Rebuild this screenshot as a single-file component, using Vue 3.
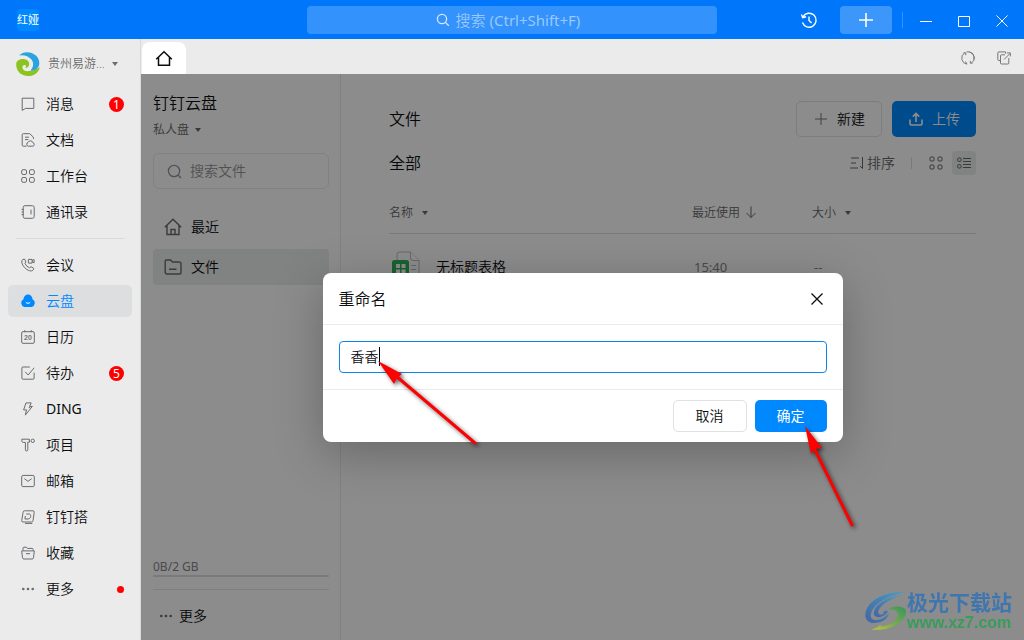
<script setup>
import { ref } from 'vue'

const fileName = ref('香香')

const icons = {
  message: '<path d="M1.200 1.200h11.600v10.200H4.600L1.200 13.400z"/>',
  doc: '<path d="M5.500 13.200H2.200a1 1 0 0 1-1-1V1.700a1 1 0 0 1 1-1h6.600L12.400 4.200V6M4 4.200h4M4 6.600h3.400"/><path d="M7.300 13.200a2 2 0 0 1-.1-3.900 2.500 2.500 0 0 1 4.700.4 1.800 1.800 0 0 1 0 3.500z"/>',
  apps: '<rect x=".7" y=".7" width="4.800" height="4.800" rx="1.400"/><rect x="8.500" y=".7" width="4.800" height="4.800" rx="1.400"/><rect x=".7" y="8.500" width="4.800" height="4.800" rx="1.400"/><rect x="8.500" y="8.500" width="4.800" height="4.800" rx="1.400"/>',
  contacts: '<rect x="2.200" y=".7" width="11" height="12.600" rx="1.800"/><path d="M.6 4.400h2M.6 7h2M.6 9.600h2M10 4.600v4.800"/>',
  meeting: '<path d="M1.900 1.400 3.500 1.100 5 4 3.900 5.300a8 8 0 0 0 4.600 4.500l1.500-1.100 2.700 1.600-.4 1.600c-1 1.300-3 1.300-5 .4C4.500 11 1.800 8.300 1 5.200.6 3.600 .8 2.100 1.900 1.400z"/><path d="M7.400 1.400h3.700v3.700H7.400zM11.100 2.600l2-1v3.200l-2-1"/>',
  drive: '<path fill="#0089ff" stroke="none" d="M7 .6a4.500 4.500 0 0 1 4.500 4.600A4.200 4.200 0 0 1 10.700 13H3.300A4.200 4.200 0 0 1 2.500 5.200 4.500 4.500 0 0 1 7 .6z"/><path stroke="#fff" d="M4.800 8.300c1.300 1.300 3.100 1.300 4.400 0"/>',
  calendar: '<rect x=".7" y="1.700" width="12.600" height="11.600" rx="1.200"/><path d="M3.800 .2v2M10.200 .2v2"/><text x="7" y="10.200" text-anchor="middle" font-size="7" font-weight="700" font-family="Liberation Sans, sans-serif" fill="#74777a" stroke="none">20</text>',
  todo: '<path d="M8.800 1H1.900a1 1 0 0 0-1 1V12.200a1 1 0 0 0 1 1h10.200a1 1 0 0 0 1-1V6.600M4.200 5.800l3 3.200 6-7.200"/>',
  ding: '<path d="M5 .9h5.200L8.600 4.400h2.800L4.300 13.100l1.200-5.200H2.600z"/><path d="M7.800 5.600h1.400"/>',
  project: '<path d="M.8 1.200h7.600v3H6.800v7.600a1.200 1.200 0 0 1-2.400 0V4.400H2.200A1.600 1.600 0 0 1 .8 2.800z"/><circle cx="11.700" cy="2.800" r="1.700"/>',
  mail: '<rect x=".7" y="1.400" width="12.600" height="11.200" rx="1.400"/><path d="M3.400 4.700 7 7.400l3.600-2.700"/>',
  dida: '<path d="M3.600 .8h8.300a1.400 1.400 0 0 1 1.300 1.600l-1.200 8.400a1.400 1.400 0 0 1-1.400 1.200H2A1.300 1.300 0 0 1 .7 10.600l1.400-8.300A1.500 1.500 0 0 1 3.600 .8z"/><path d="M5.200 4h2.900c2.600 0 2 5-1 5H3.900l.5-3M4 13.400h7.400"/>',
  favorite: '<path d="M2 4.600V2.200a1 1 0 0 1 1-1h2.400l1 1.200h4.700a1 1 0 0 1 1 1v1.200M.7 4.900h12.600l-.8 6.800a1.500 1.500 0 0 1-1.500 1.300H3a1.500 1.500 0 0 1-1.500-1.300zM5 7.700h4"/>',
  more: '<g fill="#686b6e" stroke="none"><circle cx="2.300" cy="7" r="1.300"/><circle cx="7" cy="7" r="1.300"/><circle cx="11.700" cy="7" r="1.300"/></g>'
}

const navGroups = [
  [
    { icon: 'message', label: '消息', badge: 1 },
    { icon: 'doc', label: '文档' },
    { icon: 'apps', label: '工作台' },
    { icon: 'contacts', label: '通讯录' }
  ],
  [
    { icon: 'meeting', label: '会议' },
    { icon: 'drive', label: '云盘', active: true },
    { icon: 'calendar', label: '日历' },
    { icon: 'todo', label: '待办', badge: 5 },
    { icon: 'ding', label: 'DING', latin: true },
    { icon: 'project', label: '项目' },
    { icon: 'mail', label: '邮箱' },
    { icon: 'dida', label: '钉钉搭' },
    { icon: 'favorite', label: '收藏' },
    { icon: 'more', label: '更多', dot: true }
  ]
]
</script>

<template>
  <div class="app">
    <header class="titlebar">
      <div class="brand"><span class="logo">红娅</span></div>
      <button class="global-search" type="button">
        <svg width="14" height="14" viewBox="0 0 14 14"><circle cx="6" cy="6" r="4.600" /><path d="M9.400 9.400 12.800 12.800" /></svg>
        <span>搜索 <span class="latin">(Ctrl+Shift+F)</span></span>
      </button>
      <div class="window-tools">
        <button class="history" type="button" aria-label="历史">
          <svg width="18" height="18" viewBox="0 0 18 18"><path d="M3 5.800A7 7 0 1 1 2.500 11.500M1.500 3.500l1.200 3.200 3.400-.9M9 5.500v4l2.600 2.400" /></svg>
        </button>
        <button class="create" type="button" aria-label="创建">
          <svg width="16" height="16" viewBox="0 0 16 16"><path d="M8 1v14M1 8h14" /></svg>
        </button>
        <span class="tool-divider"></span>
        <button class="win" type="button" aria-label="最小化">
          <svg width="14" height="14" viewBox="0 0 14 14"><path d="M1 8.500h12" /></svg>
        </button>
        <button class="win" type="button" aria-label="最大化">
          <svg width="14" height="14" viewBox="0 0 14 14"><path d="M1.500 3.500h11v10h-11z" /></svg>
        </button>
        <button class="win" type="button" aria-label="关闭窗口">
          <svg width="14" height="14" viewBox="0 0 14 14"><path d="M1.500 2.500l11 11M12.500 2.500l-11 11" /></svg>
        </button>
      </div>
    </header>

    <div class="shell">
      <aside class="sidebar">
        <button class="profile" type="button">
          <svg class="avatar" width="24" height="24" viewBox="0 0 24 24">
            <path fill="#2aa3e0" d="M3 3.500C7-1 15-1 20 3.500c5 5 4 12-.5 14.500-2 1-4 1-5 .5 3-3 3.600-7.500 1-11C12.500 3.500 7 2.500 3 3.500z" />
            <path fill="#8cc31f" d="M.2 12C.4 8.500 4 6.800 7.500 7c4 .3 6.200 3 5.600 6-.5 2.200-2.800 3.400-4.300 2.600 1.500-.4 1.600-1.500.8-2.200-1.500-1-3.400 0-3.200 2 .2 2.600 2.600 4.200 7 3.700 4-.4 8-2 10.400-4.200C23 20.500 18 24 12 24 5 24 0 19 .2 12z" />
          </svg>
          <span>贵州易游...</span>
          <i class="caret-down"></i>
        </button>
        <nav>
          <ul v-for="(group, g) in navGroups" :key="g" class="nav-group">
            <li v-for="item in group" :key="item.label">
              <a href="#" class="nav-item" :class="{ active: item.active }">
                <svg width="14" height="14" viewBox="0 0 14 14" v-html="icons[item.icon]"></svg>
                <span class="nav-label" :class="{ latin: item.latin }">{{ item.label }}</span>
                <span v-if="item.badge" class="badge">{{ item.badge }}</span>
                <span v-if="item.dot" class="dot"></span>
              </a>
            </li>
          </ul>
        </nav>
      </aside>

      <div class="main">
        <div class="tabs">
          <button class="home-tab" type="button" aria-label="首页">
            <svg width="18" height="18" viewBox="0 0 18 18"><path d="M1.200 10.200 9 2.800l7.800 7.400M3.500 8.500v7.800h11V8.500" /></svg>
          </button>
          <div class="tab-tools">
            <button type="button" aria-label="刷新">
              <svg width="14" height="14" viewBox="0 0 14 14"><path d="M5.800 13.200A6.200 6.200 0 0 1 3.400 2M2.500 1.800h2.200v2.400M5.500 1a6.200 6.200 0 0 1 7.400 7.500M4.500 10.500l1.500 2.700M8.200 .8A6.200 6.200 0 0 1 10.600 12M11.500 12.200H9.300V9.800" /></svg>
            </button>
            <button type="button" aria-label="新窗口打开">
              <svg width="14" height="14" viewBox="0 0 14 14"><path d="M3.500 9.500H1.800a1 1 0 0 1-1-1V1.900a1 1 0 0 1 1-1h6.700v1.600M8 3.800H4.500a1 1 0 0 0-1 1V12a1 1 0 0 0 1 1h6.300a1 1 0 0 0 1-1V7M7 8.500l6-6M9.800 1.900h3.500v3.500" /></svg>
            </button>
          </div>
        </div>

        <div class="workspace">
          <section class="drive-nav">
            <h1>钉钉云盘</h1>
            <button class="space" type="button">私人盘 <i class="caret-down"></i></button>
            <label class="file-search">
              <svg width="15" height="15" viewBox="0 0 16 16"><circle cx="7.500" cy="7.500" r="6" /><path d="M12 12 15 15" /></svg>
              <input type="text" placeholder="搜索文件" aria-label="搜索文件" />
            </label>
            <ul class="drive-list">
              <li><a href="#">
                <svg width="18" height="18" viewBox="0 0 18 18"><path d="M.8 9.200 9 1.200l8.200 8M3 7.500v9h12v-9M7 16.200v-4.700h4v4.700" /></svg>
                <span>最近</span></a></li>
              <li><a href="#" class="selected">
                <svg width="18" height="18" viewBox="0 0 18 18"><path d="M1.200 14.200V3.200A1.200 1.200 0 0 1 2.400 2h4.200l1.800 2h6.800A1.800 1.800 0 0 1 17 5.800v8.400a1.800 1.800 0 0 1-1.800 1.800H3a1.800 1.800 0 0 1-1.800-1.800zM5 11.200h7.500" /></svg>
                <span>文件</span></a></li>
            </ul>
            <div class="drive-foot">
              <p class="quota latin">0B/2 GB</p>
              <div class="quota-bar"></div>
              <a href="#" class="drive-more">
                <svg width="14" height="14" viewBox="0 0 14 14" v-html="icons.more"></svg>
                <span>更多</span>
              </a>
            </div>
          </section>

          <section class="files">
            <div class="files-head">
              <h2>文件</h2>
              <div class="actions">
                <button class="new" type="button">
                  <svg width="14" height="14" viewBox="0 0 14 14"><path d="M7 1v12M1 7h12" /></svg>新建
                </button>
                <button class="upload" type="button">
                  <svg width="16" height="16" viewBox="0 0 16 16"><path d="M2 8.500v4A1.500 1.500 0 0 0 3.500 14h9a1.500 1.500 0 0 0 1.500-1.500v-4M8 11V2.500M4.800 5.600 8 2.400l3.200 3.200" /></svg>上传
                </button>
              </div>
            </div>
            <div class="files-sub">
              <h2>全部</h2>
              <div class="view-tools">
                <button class="sort" type="button">
                  <svg width="16" height="14" viewBox="0 0 16 14"><path d="M2 2h8M2 7h5M1 12h8M13.500 1v11.500l-2.500-2.500" /></svg>排序
                </button>
                <span class="view-divider"></span>
                <button class="view" type="button" aria-label="网格">
                  <svg width="14" height="14" viewBox="0 0 14 14"><rect x="1" y="1" width="4" height="4" rx="1" /><rect x="9" y="1" width="4" height="4" rx="1" /><rect x="1" y="9" width="4" height="4" rx="1" /><rect x="9" y="9" width="4" height="4" rx="1" /></svg>
                </button>
                <button class="view current" type="button" aria-label="列表">
                  <svg width="14" height="14" viewBox="0 0 14 14"><rect x=".7" y="2" width="3.400" height="3.400" rx="1" /><rect x=".7" y="8.600" width="3.400" height="3.400" rx="1" /><path d="M6 2.500h8M6 5.500h8M6 8.500h8M6 11.500h8" /></svg>
                </button>
              </div>
            </div>
            <table>
              <colgroup><col class="c-name" /><col class="c-time" /><col /></colgroup>
              <thead>
                <tr>
                  <th scope="col">名称 <i class="caret-down"></i></th>
                  <th scope="col">最近使用
                    <svg width="12" height="12" viewBox="0 0 12 12"><path d="M6 .5v11M1.500 7 6 11.500 10.500 7" /></svg>
                  </th>
                  <th scope="col">大小 <i class="caret-down"></i></th>
                </tr>
              </thead>
              <tbody>
                <tr>
                  <td>
                    <div class="file">
                      <svg width="30" height="32" viewBox="0 0 30 32">
                        <path fill="#fff" stroke="#b8bcc8" d="M5 11V3.500A2.500 2.500 0 0 1 7.500 1h11L27 9.500v19a2.500 2.500 0 0 1-2.500 2.500h-17A2.500 2.500 0 0 1 5 28.500z" />
                        <path fill="#fff" stroke="#b8bcc8" d="M18.500 1v6A2.500 2.500 0 0 0 21 9.500h6M19 14.500h5M19 18.500h5M19 22.500h5" />
                        <rect x="0" y="9" width="17" height="17" rx="2.500" fill="#2db457" stroke="none" />
                        <path fill="#fff" stroke="none" d="M4 13h4v4H4zM9.500 13h4v4h-4zM4 18.500h4v4H4zM9.500 18.500h4v4h-4z" />
                      </svg>
                      <span>无标题表格</span>
                    </div>
                  </td>
                  <td class="meta latin">15:40</td>
                  <td class="meta latin">--</td>
                </tr>
              </tbody>
            </table>
          </section>

          <div class="overlay">
            <form class="dialog" role="dialog" aria-labelledby="dialog-title" @submit.prevent>
              <div class="dialog-head">
                <h3 id="dialog-title">重命名</h3>
                <button type="button" aria-label="关闭">
                  <svg width="14" height="14" viewBox="0 0 14 14"><path d="M1.500 1.500l11 11M12.500 1.500l-11 11" /></svg>
                </button>
              </div>
              <div class="dialog-body">
                <div class="field">
                  <input v-model="fileName" type="text" aria-labelledby="dialog-title" />
                  <span class="text-cursor"></span>
                </div>
              </div>
              <div class="dialog-foot">
                <button class="cancel" type="button">取消</button>
                <button class="confirm" type="submit">确定</button>
              </div>
              <svg class="pointers" aria-hidden="true">
                <path d="M73 103 152 170M491 175 529 252" stroke="#fe0000" stroke-width="3" stroke-linecap="round" />
                <path fill="#fe0000" d="M55 88 79 101 74 105 71 111zM482 153 499 175 492 176 488 181z" />
              </svg>
            </form>
          </div>

          <div class="watermark">
            <svg width="42" height="40" viewBox="0 0 42 40">
              <defs>
                <linearGradient id="wm-blue" x1="0" y1="1" x2="1" y2="0"><stop offset="0" stop-color="#3b62a8" /><stop offset="1" stop-color="#3fa0cc" /></linearGradient>
                <linearGradient id="wm-green" x1="0" y1="1" x2="1" y2="0"><stop offset="0" stop-color="#c8c83a" /><stop offset=".5" stop-color="#6fae4a" /><stop offset="1" stop-color="#2d9658" /></linearGradient>
              </defs>
              <path fill="url(#wm-blue)" d="M41 1C20 0 3 9 .5 22-.5 28 3 32 9 32c8 0 14-4 15-10-3 4-8 7-13 7-4 0-6-2-5-6C8 13 22 5 41 1z" />
              <path fill="url(#wm-blue)" d="M37 4C22 6 11 13 9 20.500c-1 4 2 6.500 6.500 5.500 4-1 7-3.500 7.500-6-2-.5-4 0-5.500 1.500.8-.2 1.500.1 1.300.8-.4 1.400-4.300 2-5.300 0C12 17 22 9 37 4z" />
              <path fill="url(#wm-green)" d="M23 18c6-4 17-3.500 18 2 1 9-12 17-23 18.500-4 .3-8 0-12 .5 4-1.500 7-3 9-5l2 1.500c9-1.500 15-6 16-11.500.5-4-4-6-10-6z" />
            </svg>
            <div class="watermark-text"><strong>极光下载站</strong><span>www.xz7.com</span></div>
          </div>
        </div>
      </div>
    </div>
  </div>
</template>

<style>
html, body { margin: 0; }
</style>

<style scoped>
.app, .app * { box-sizing: border-box; }
.app {
  display: flex;
  flex-direction: column;
  height: 100vh;
  overflow: hidden;
  font: 350 14px/20px "Noto Sans", "Noto Sans CJK SC", sans-serif;
  color: #0b0d0f;
}
button, input { font: inherit; color: inherit; margin: 0; }
button { padding: 0; border: 0; background: none; }
a { color: inherit; text-decoration: none; }
h1, h2, h3, p, ul { margin: 0; padding: 0; font-size: 16px; line-height: 24px; font-weight: inherit; }
ul { list-style: none; }
svg { display: block; flex: none; fill: none; stroke: currentColor; }
.app .latin { font-weight: 400; }
.caret-down {
  display: inline-block;
  border: 3px solid transparent;
  border-top: 4px solid currentColor;
  border-bottom: 0;
}

.titlebar {
  flex: none;
  display: grid;
  grid-template-columns: 1fr 40% 1fr;
  align-items: center;
  height: 39px;
  background: #0077fa;
  color: #fff;
}
.brand { padding-left: 17px; }
.logo {
  display: block;
  width: 22px;
  border-radius: 4px;
  background: #0089ff;
  font-size: 11px;
  line-height: 22px;
  font-weight: 400;
  text-align: center;
}
.global-search {
  display: flex;
  align-items: center;
  justify-content: center;
  gap: 6px;
  height: 28px;
  padding-right: 8px;
  border-radius: 4px;
  background: #3392fb;
  color: #99c9fd;
  font-size: 15px;
}
.global-search svg { color: #d6e9fe; stroke-width: 1.3; }
.window-tools { display: flex; align-items: center; justify-content: flex-end; padding-right: 3px; }
.window-tools button { display: grid; place-items: center; height: 28px; }
.history { width: 28px; margin-right: 17px; stroke-width: 1.4; }
.create { width: 52px; border-radius: 4px; background: #3d97fb; stroke-width: 1.6; }
.tool-divider { width: 1px; height: 16px; margin: 0 4px 0 10px; background: #3392fb; }
.win { width: 38px; }

.shell { flex: 1; display: flex; min-height: 0; }
.sidebar {
  flex: none;
  width: 141px;
  border-right: 1px solid #d8d9da;
  background: #ebebeb;
}
.profile {
  display: flex;
  align-items: center;
  gap: 8px;
  width: 100%;
  height: 49px;
  padding-left: 16px;
  color: #6c6c6c;
  font-size: 12px;
}
.profile .caret-down { margin-left: -1px; }
.avatar { stroke: none; }
.nav-group { display: grid; gap: 4px; padding: 0 8px; }
.nav-group + .nav-group { margin-top: 10px; }
.nav-group + .nav-group::before {
  content: "";
  height: 1px;
  margin: 0 8px 6px;
  background: #d8d9da;
}
.nav-item {
  display: flex;
  align-items: center;
  height: 32px;
  padding: 0 8px 0 13px;
  border-radius: 5px;
  font-size: 14px;
  line-height: 20px;
}
.nav-item svg { margin-right: 11px; color: #686b6e; }
.nav-item.active { background: #dcdee0; color: #0089ff; }
.nav-label { flex: 1; }
.badge {
  width: 15px;
  border-radius: 8px;
  background: #f00;
  color: #fff;
  font-size: 12px;
  font-weight: 400;
  line-height: 15px;
  text-align: center;
}
.dot { width: 7px; height: 7px; border-radius: 4px; background: #f00; }

.main { flex: 1; display: flex; flex-direction: column; min-width: 0; }
.tabs {
  flex: none;
  display: flex;
  justify-content: space-between;
  height: 35px;
  padding: 3px 8px 0 1px;
  background: #ebebeb;
}
.home-tab {
  display: grid;
  place-items: center;
  width: 44px;
  border-radius: 8px 8px 0 0;
  background: #fff;
  stroke-width: 1.5;
}
.tab-tools { display: flex; gap: 12px; color: #777; }
.tab-tools button { display: grid; place-items: center; width: 24px; }

.workspace { position: relative; flex: 1; display: flex; min-height: 0; background: #fff; }
.drive-nav {
  flex: none;
  display: flex;
  flex-direction: column;
  width: 200px;
  padding: 17px 11px 0 12px;
  border-right: 1px solid #ebeced;
}
.space { align-self: flex-start; margin-top: 5px; color: #66686a; font-size: 12px; }
.space .caret-down { margin: 0 0 2px 3px; }
.file-search {
  display: flex;
  align-items: center;
  gap: 8px;
  height: 36px;
  margin-top: 13px;
  padding: 0 13px;
  border: 1px solid #ebebec;
  border-radius: 6px;
  color: #929496;
}
.file-search svg { stroke-width: 1.4; }
.file-search input { min-width: 0; width: 100%; padding: 0; border: 0; background: none; outline: 0; }
.file-search input::placeholder { color: #929496; opacity: 1; }
.drive-list { display: grid; gap: 4px; margin-top: 20px; }
.drive-list a {
  display: flex;
  align-items: center;
  gap: 9px;
  height: 36px;
  padding: 0 11px;
  border-radius: 4px;
  font-size: 14px;
}
.drive-list svg { color: #686b6e; stroke-width: 1.4; }
.drive-list .selected { background: #ebeeed; }
.drive-foot { margin-top: auto; }
.quota { padding-top: 2px; color: #85878a; font-size: 12px; line-height: 16px; }
.quota-bar { height: 2px; border-radius: 1px; background: #dedfe0; }
.drive-more {
  display: flex;
  align-items: center;
  gap: 6px;
  height: 51px;
  margin-top: 12px;
  padding: 2px 6px 0;
  border-top: 1px solid #e4e5e6;
}

.files { flex: 1; min-width: 0; padding: 27px 48px 0; }
.files-head, .files-sub { display: flex; align-items: center; justify-content: space-between; }
.files-sub { margin-top: 14px; }
.actions { display: flex; gap: 10px; }
.actions button {
  display: flex;
  align-items: center;
  height: 36px;
  border-radius: 5px;
}
.new { gap: 9px; padding: 0 16px 0 17px; border: 1px solid #e2e3e4; }
.new svg { color: #76787a; }
.upload { gap: 8px; padding: 0 16px; background: #0089ff; color: #fff; }
.upload svg { stroke-width: 1.6; }
.view-tools { display: flex; align-items: center; color: #66686a; }
.sort { display: flex; align-items: center; gap: 2px; }
.view-divider { width: 1px; height: 12px; margin: 0 12px 0 16px; background: #dedfe0; }
.view { display: grid; place-items: center; width: 24px; height: 24px; border-radius: 4px; }
.view.current { margin-left: 4px; background: #eceeee; }
.view svg { color: #686b6e; }

table { width: 100%; margin-top: 16px; border-collapse: collapse; table-layout: fixed; }
.c-name { width: 303px; }
.c-time { width: 120px; }
th {
  height: 42px;
  padding: 2px 0 0;
  border-bottom: 1px solid #dcdddf;
  color: #66686a;
  font-size: 12px;
  font-weight: inherit;
  text-align: left;
}
th .caret-down { margin: 0 0 2px 6px; }
th svg { display: inline-block; margin-left: 2px; vertical-align: -1px; }
td { height: 66px; padding: 1px 0 0; }
.file { display: flex; align-items: center; gap: 14px; padding-left: 3px; }
.meta { padding-left: 2px; color: #85878a; font-size: 13px; }

.overlay {
  position: absolute;
  inset: 0;
  display: grid;
  place-items: center;
  background: rgba(0, 0, 0, .45);
}
.dialog {
  position: relative;
  width: 520px;
  max-width: 90%;
  border-radius: 8px;
  background: #fff;
  box-shadow: 0 12px 48px rgba(0, 0, 0, .26);
}
.dialog-head {
  display: flex;
  align-items: center;
  justify-content: space-between;
  height: 52px;
  padding: 2px 16px 0;
  border-bottom: 1px solid #ebebec;
}
.dialog-head button { display: grid; place-items: center; width: 20px; height: 20px; stroke-width: 1.3; }
.dialog-body { padding: 16px; }
.field { position: relative; }
.field input {
  display: block;
  width: 100%;
  height: 32px;
  padding: 0 11px 2px;
  border: 1px solid #0f85e8;
  border-radius: 4px;
  outline: 0;
}
.text-cursor { position: absolute; top: 6px; left: 40px; width: 1px; height: 19px; background: #000; }
.dialog-foot {
  display: flex;
  align-items: center;
  justify-content: flex-end;
  gap: 8px;
  height: 53px;
  padding: 0 16px;
  border-top: 1px solid #ebebec;
}
.dialog-foot button { height: 32px; border-radius: 5px; }
.cancel { width: 74px; border: 1px solid #e0e1e2; }
.confirm { width: 72px; background: #0089ff; color: #fff; font-weight: 400; }
.pointers {
  position: absolute;
  inset: 0;
  width: 100%;
  height: 100%;
  overflow: visible;
  pointer-events: none;
  stroke: none;
  filter: drop-shadow(2px 2px 2px rgba(0, 0, 0, .6));
}

.watermark { position: absolute; right: 12px; bottom: 8px; display: flex; align-items: center; opacity: .9; }
.watermark svg { stroke: none; }
.watermark-text { display: grid; }
.watermark-text strong { color: #3874b4; font-size: 21px; line-height: 24px; font-weight: 700; }
.watermark-text span { color: #2f9f55; font: 700 16px/18px "Liberation Sans", sans-serif; }
</style>
